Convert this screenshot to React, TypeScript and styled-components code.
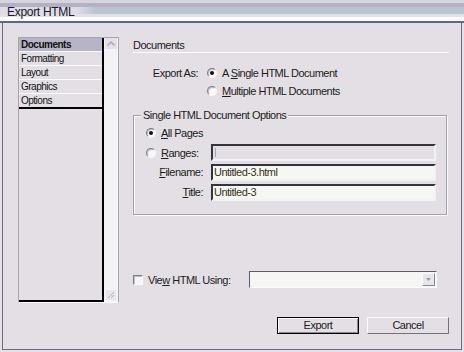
import React from 'react';
import styled, { createGlobalStyle } from 'styled-components';

const Global = createGlobalStyle`
  html, body { margin: 0; padding: 0; background: #e4e0e6; }
  body { width: 464px; height: 352px; overflow: hidden; font-family: "Liberation Sans", Arial, sans-serif; }
  * { box-sizing: border-box; }
`;

const Window = styled.div`
  width: 464px;
  height: 352px;
  display: flex;
  flex-direction: column;
  background: #e4e0e6;
`;

const TitleBar = styled.div`
  height: 23px;
  flex: none;
  padding: 6px 0 0 7px;
  border-bottom: 2px solid #5e6698;
  background:
    linear-gradient(to bottom, #d6d4dc 0 3px, #b3b1c3 3px 7px, transparent 7px 14px, #e4e0e6 14px 17px, #fbfbfd 17px 21px),
    linear-gradient(to right, #dedde6 0, #dedde6 76px, #b8c4d2 96px);
  font-size: 12px;
  line-height: 12px;
  letter-spacing: -0.3px;
  color: #18182a;
`;

const Body = styled.div`
  flex: 1;
  margin: 0 2px 2px;
  border: 1px solid #6e6c80;
  border-top: none;
  background: #e3dfe5;
  padding: 14px 12px 0 15px;
  display: flex;
  flex-direction: column;
  font-size: 11px;
  letter-spacing: -0.5px;
  color: #1c1c20;
`;

const Main = styled.div`
  display: flex;
  gap: 14px;
  height: 266px;
`;

const ListBox = styled.div`
  width: 101px;
  height: 266px;
  flex: none;
  display: flex;
  border: 1px solid;
  border-color: #a6a4b2 #aaa8b6 #fafafa #a6a4b2;
`;

const Items = styled.div`
  flex: 1;
  border-right: 2px solid #000;
  border-bottom: 2px solid #000;
`;

const Item = styled.div<{ $sel?: boolean; $last?: boolean }>`
  height: ${(p) => (p.$last ? 15 : 14)}px;
  padding-left: 2px;
  font-size: 10px;
  line-height: 13px;
  letter-spacing: -0.5px;
  border-bottom: ${(p) => (p.$last ? '2px solid #000' : '1px solid #fafafa')};
  background: ${(p) => (p.$sel ? '#b6b4c6' : 'transparent')};
  font-weight: ${(p) => (p.$sel ? 700 : 400)};
  color: #111;
`;

const Scroll = styled.div`
  width: 14px;
  flex: none;
  background: #f3f3f5;
  display: flex;
  flex-direction: column;
  justify-content: space-between;
  align-items: center;
  padding: 0 0 2px 0;
`;

const ScrollBtn = styled.div`
  width: 12px;
  height: 11px;
  background: #e6dfe6;
  display: flex;
  align-items: center;
  justify-content: center;
`;

const Grip = styled.div`
  width: 10px;
  height: 10px;
  background: #e8e6ec;
  display: flex;
  align-items: center;
  justify-content: center;
`;

const Panel = styled.div`
  width: 316px;
  display: flex;
  flex-direction: column;
`;

const Heading = styled.div`
  height: 16px;
  padding-top: 1px;
  line-height: 14px;
  border-bottom: 1px solid #fbfbfd;
  margin-right: 0;
`;

const OptGrid = styled.div`
  display: grid;
  grid-template-columns: 65px auto;
  column-gap: 9px;
  row-gap: 2px;
  grid-auto-rows: 16px;
  margin-top: 12px;
`;

const RightLabel = styled.div<{ $h?: number }>`
  text-align: right;
  line-height: ${(p) => p.$h ?? 16}px;
  white-space: nowrap;
`;

const Choice = styled.div<{ $span?: boolean }>`
  display: flex;
  align-items: center;
  gap: 5px;
  white-space: nowrap;
  ${(p) => (p.$span ? 'grid-column: 1 / -1;' : '')}
`;

const Radio = styled.span<{ $on?: boolean }>`
  width: 10px;
  height: 10px;
  flex: none;
  border-radius: 50%;
  position: relative;
  background: #f7f7f7;
  border: 1px solid;
  border-color: #7e7c8a #fafafa #fafafa #7e7c8a;
  box-shadow: inset 1px 1px 0 #bdbbc6;
  &::after {
    content: '';
    display: ${(p) => (p.$on ? 'block' : 'none')};
    position: absolute;
    left: 2px;
    top: 2px;
    width: 4px;
    height: 4px;
    border-radius: 50%;
    background: #111;
  }
`;

const Check = styled.span`
  width: 10px;
  height: 10px;
  flex: none;
  background: #f5f5f5;
  border: 1px solid;
  border-color: #7c7a88 #fafafa #fafafa #7c7a88;
  box-shadow: inset 1px 1px 0 #c0bec8;
`;

const Group = styled.div`
  position: relative;
  margin-top: 16px;
  width: 314px;
  height: 100px;
  border: 1px solid #a2a0ac;
  box-shadow: inset 1px 1px 0 #fbfbfb, 1px 1px 0 #fbfbfb;
  padding: 9px 0 0 12px;
`;

const Legend = styled.span`
  position: absolute;
  top: -7px;
  left: 7px;
  padding: 0 2px;
  background: #e3dfe5;
  line-height: 13px;
  white-space: nowrap;
`;

const GroupGrid = styled.div`
  display: grid;
  grid-template-columns: 57px 225px;
  column-gap: 8px;
  grid-template-rows: 16px 17px 17px 17px;
  row-gap: 3px;
`;

const Field = styled.div<{ $disabled?: boolean }>`
  height: 17px;
  border: 2px solid;
  border-color: #34343c #f2f2f4 #f2f2f4 #34343c;
  background: ${(p) => (p.$disabled ? '#e3dfe5' : '#f5f7f3')};
  color: #3a3218;
  padding-left: 1px;
  line-height: 13px;
  white-space: nowrap;
  display: flex;
  align-items: center;
`;

const Caret = styled.span`
  width: 1px;
  height: 9px;
  margin-left: 1px;
  background: #a8a6b0;
`;

const ViewRow = styled.div`
  margin-top: 56px;
  display: grid;
  grid-template-columns: 116px 188px;
  height: 17px;
  align-items: center;
`;

const Dropdown = styled.div`
  height: 17px;
  border: 1px solid;
  border-color: #5e5c6a #fbfbfb #fbfbfb #5e5c6a;
  background: #f6f6f4;
  display: flex;
  align-items: center;
  justify-content: flex-end;
  padding-right: 1px;
`;

const DropBtn = styled.div`
  width: 13px;
  height: 13px;
  background: #e8e6ec;
  border: 1px solid;
  border-color: #fafafa #8c8a98 #8c8a98 #fafafa;
  display: flex;
  align-items: center;
  justify-content: center;
`;

const Footer = styled.div`
  margin-top: 14px;
  display: flex;
  justify-content: flex-end;
  gap: 8px;
`;

const Button = styled.div<{ $default?: boolean }>`
  width: 82px;
  height: 17px;
  text-align: center;
  line-height: 15px;
  border: 1px solid;
  border-color: ${(p) => (p.$default ? '#000' : '#fbfbfb #74727e #74727e #fbfbfb')};
  box-shadow: ${(p) => (p.$default ? 'inset 1px 1px 0 #fbfbfb, inset -1px -1px 0 #8a8896' : 'none')};
  background: #e3dfe5;
  color: #1c1c20;
`;

const U = styled.u`
  text-decoration: underline;
  text-underline-offset: 1px;
`;

export default function App() {
  return (
    <>
      <Global />
      <Window>
        <TitleBar>Export HTML</TitleBar>
        <Body>
          <Main>
            <ListBox>
              <Items>
                <Item $sel>Documents</Item>
                <Item>Formatting</Item>
                <Item>Layout</Item>
                <Item>Graphics</Item>
                <Item $last>Options</Item>
              </Items>
              <Scroll>
                <ScrollBtn>
                  <svg width="8" height="5" viewBox="0 0 8 5">
                    <polyline points="0.5,4.5 4,1 7.5,4.5" fill="none" stroke="#a9a7b6" strokeWidth="1.5" />
                  </svg>
                </ScrollBtn>
                <Grip>
                  <svg width="8" height="8" viewBox="0 0 8 8">
                    <line x1="1" y1="7" x2="7" y2="1" stroke="#b4b2be" strokeWidth="1" />
                    <line x1="4" y1="7" x2="7" y2="4" stroke="#b4b2be" strokeWidth="1" />
                  </svg>
                </Grip>
              </Scroll>
            </ListBox>
            <Panel>
              <Heading>Documents</Heading>
              <OptGrid>
                <RightLabel>Export As:</RightLabel>
                <Choice>
                  <Radio $on />
                  <span>A <U>S</U>ingle HTML Document</span>
                </Choice>
                <div />
                <Choice>
                  <Radio />
                  <span><U>M</U>ultiple HTML Documents</span>
                </Choice>
              </OptGrid>
              <Group>
                <Legend>Single HTML Document Options</Legend>
                <GroupGrid>
                  <Choice $span>
                    <Radio $on />
                    <span><U>A</U>ll Pages</span>
                  </Choice>
                  <Choice>
                    <Radio />
                    <span><U>R</U>anges:</span>
                  </Choice>
                  <Field $disabled>
                    <Caret />
                  </Field>
                  <RightLabel $h={17}><U>F</U>ilename:</RightLabel>
                  <Field>Untitled-3.html</Field>
                  <RightLabel $h={17}><U>T</U>itle:</RightLabel>
                  <Field>Untitled-3</Field>
                </GroupGrid>
              </Group>
              <ViewRow>
                <Choice>
                  <Check />
                  <span>Vie<U>w</U> HTML Using:</span>
                </Choice>
                <Dropdown>
                  <DropBtn>
                    <svg width="5" height="3" viewBox="0 0 5 3">
                      <polygon points="0,0 5,0 2.5,3" fill="#9c9aa8" />
                    </svg>
                  </DropBtn>
                </Dropdown>
              </ViewRow>
            </Panel>
          </Main>
          <Footer>
            <Button $default>Export</Button>
            <Button>Cancel</Button>
          </Footer>
        </Body>
      </Window>
    </>
  );
}
